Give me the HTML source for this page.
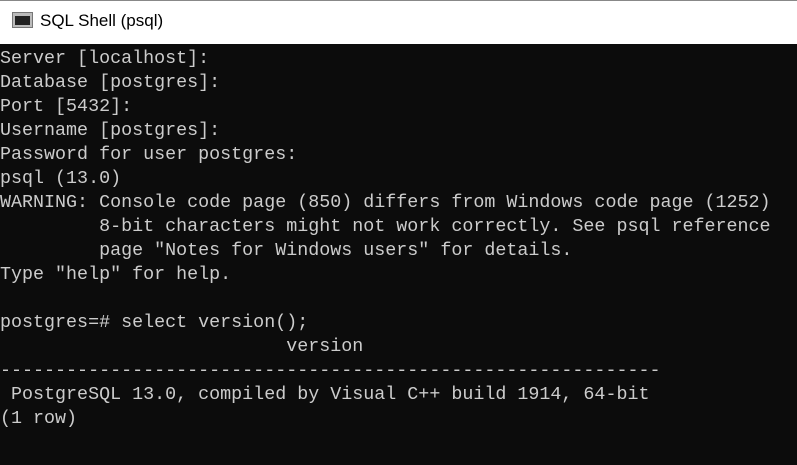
<!DOCTYPE html>
<html><head><style>
html,body{margin:0;padding:0;width:797px;height:465px;overflow:hidden;background:#0c0c0c}
.t{position:absolute;left:0;top:0;width:797px;height:44px;background:#fff;border-top:1px solid #888;box-sizing:border-box}
.ti{position:absolute;left:40px;top:10px;font:17px "Liberation Sans",sans-serif;color:#000}
.ic{position:absolute;left:12px;top:11px;width:21px;height:16px;background:#bbb;border:1px solid #777;box-sizing:border-box}
.ic div{position:absolute;left:2px;top:3px;width:15px;height:9px;background:#222}
pre{position:absolute;left:0;top:47px;margin:0;font:18.35px/24px "Liberation Mono",monospace;color:#cccccc}
</style></head><body>
<div class="t"><div class="ic"><div></div></div><div class="ti">SQL Shell (psql)</div></div>
<pre>Server [localhost]:
Database [postgres]:
Port [5432]:
Username [postgres]:
Password for user postgres:
psql (13.0)
WARNING: Console code page (850) differs from Windows code page (1252)
         8-bit characters might not work correctly. See psql reference
         page "Notes for Windows users" for details.
Type "help" for help.

postgres=# select version();
                          version
------------------------------------------------------------
 PostgreSQL 13.0, compiled by Visual C++ build 1914, 64-bit
(1 row)
</pre>
</body></html>
